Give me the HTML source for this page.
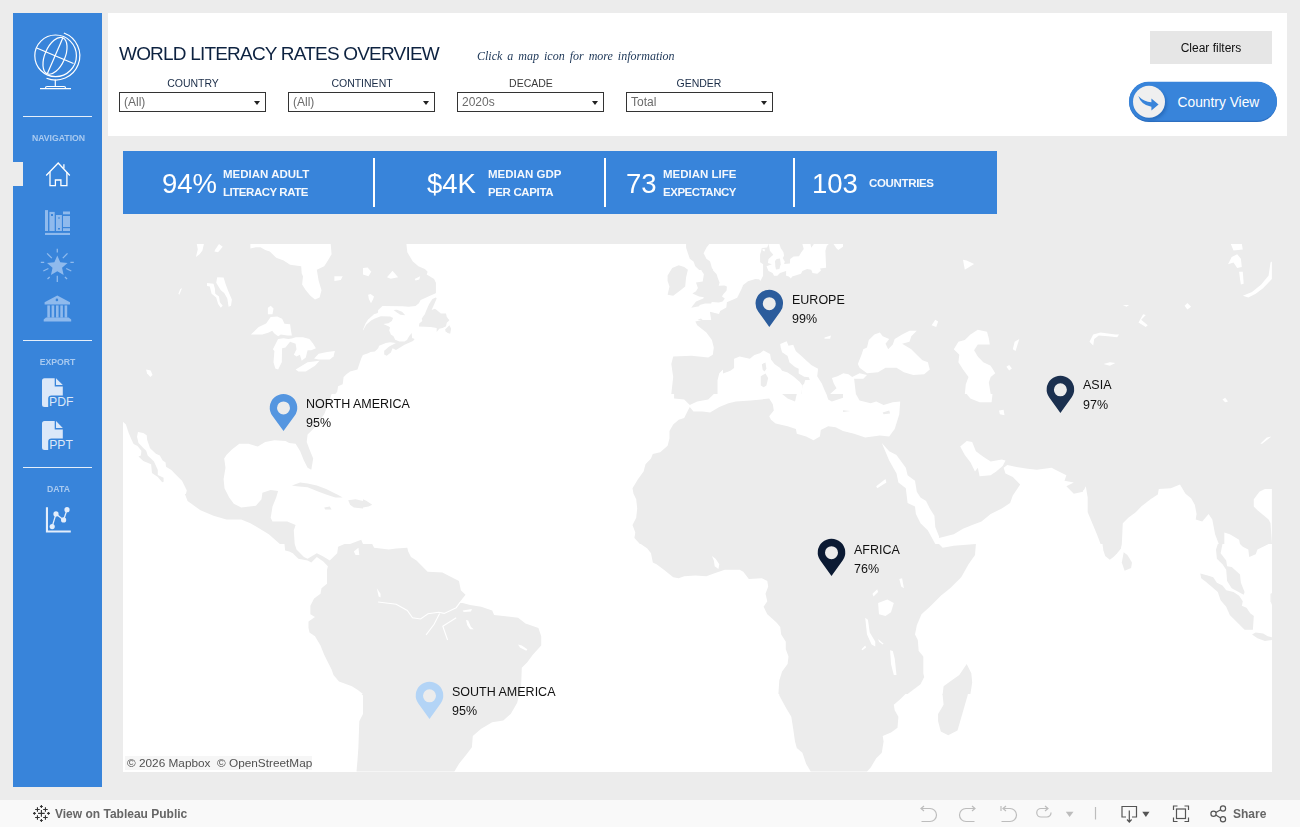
<!DOCTYPE html>
<html><head><meta charset="utf-8">
<style>
*{margin:0;padding:0;box-sizing:border-box}
html,body{width:1300px;height:827px;overflow:hidden;background:#ececec;font-family:"Liberation Sans",sans-serif}
.a{position:absolute;white-space:nowrap;line-height:1}
.pl,.title,.hint,.flab,.ftxt,.kbig,.ksm,.at,.btxt,.slab,#clear{will-change:transform}
#side{left:13px;top:13px;width:89px;height:774px;background:#3884da}
.sline{position:absolute;left:10px;width:69px;height:1.5px;background:#e6effa}
.slab{position:absolute;left:0;width:89px;text-align:center;font-size:8.7px;font-weight:bold;color:#a9caf0;line-height:1}
#hdr{left:108px;top:13px;width:1179px;height:123px;background:#fff}
.title{left:119px;top:43.9px;font-size:19px;color:#0d2240;letter-spacing:-0.8px}
.hint{left:477px;top:50px;font-family:"Liberation Serif",serif;font-style:italic;font-size:12px;color:#1b3556;word-spacing:2px}
.flab{font-size:10.5px;color:#1a2c47;text-align:center;width:146px;top:78.1px}
.fbox{position:absolute;top:92px;width:147px;height:20px;border:1px solid #333;background:#fff}
.ftxt{position:absolute;left:3.5px;top:2.8px;font-size:12px;line-height:1;color:#6b6b6b;white-space:nowrap}
.fbox:after{content:"";position:absolute;right:5px;top:8px;border-left:3.5px solid transparent;border-right:3.5px solid transparent;border-top:4.5px solid #222}
#clear{left:1150px;top:31px;width:122px;height:33px;background:#e6e6e6;font-size:12px;color:#111;text-align:center;line-height:34.5px}
#kpi{left:123px;top:151px;width:874px;height:63px;background:#3884da;color:#fff}
.ksep{position:absolute;top:7px;width:2px;height:49px;background:#fff}
.kbig{position:absolute;top:18.7px;font-size:27.5px;line-height:27.5px;white-space:nowrap}
.ksm{position:absolute;font-size:11.5px;font-weight:bold;line-height:17.5px;white-space:nowrap;color:#f4f8fd}
#map{left:123px;top:244px;width:1149px;height:528px;background:#fff;overflow:hidden}
.pl{position:absolute;font-size:12.5px;color:#111;line-height:1;white-space:nowrap}
#attr{left:125px;top:756px;width:187px;height:14px;background:rgba(245,245,245,0.85)}
.at{left:127px;top:757.8px;font-size:11.8px;color:#505050}
#bar{left:0;top:800px;width:1300px;height:27px;background:#f9f9f9}
.btxt{font-size:12px;color:#666;font-weight:bold;top:808px}
</style></head><body>
<div id="side" class="a">
  <svg style="position:absolute;left:0;top:0" width="89" height="774" viewBox="0 0 89 774">
    <g fill="none" stroke="#fff" stroke-width="1.2">
      <circle cx="42.6" cy="42.8" r="20.8"/>
      <ellipse cx="42" cy="42.8" rx="10" ry="19.6" transform="rotate(23.4 42 42.8)"/>
      <line x1="49.8" y1="24.9" x2="34.3" y2="60.7"/>
      <line x1="23.7" y1="35" x2="60.5" y2="50.5"/>
      <path d="M50.84 20.05 A24.2 24.2 0 1 1 33.53 65.24"/>
      <path d="M42.3 66.5 V73.5 M32.5 75 Q32.5 73.5 34 73.5 H51 Q52.5 73.5 52.5 75 M27 75.7 H58"/>
    </g>
    <!-- home -->
    <g fill="none" stroke="#fff" stroke-width="1.3" stroke-linejoin="miter">
      <path d="M33.2 162.5 L45.2 150 L56.8 162.5"/>
      <path d="M37 159 V172.7 H42.4 V167 H47.9 V172.7 H53.9 V159"/>
      <path d="M50.9 151.3 V155.5"/>
    </g>
    <!-- books -->
    <g fill="#8fbaed">
      <rect x="32" y="197.1" width="3" height="20.9"/>
      <rect x="36.4" y="198.9" width="5.3" height="19.1"/>
      <rect x="43" y="202" width="5.9" height="16"/>
      <rect x="50" y="198.5" width="7" height="2.8"/>
      <rect x="50" y="203" width="7" height="11"/>
      <rect x="50" y="215.2" width="7" height="2.8"/>
      <rect x="32" y="219.9" width="25" height="2.1"/>
    </g>
    <g fill="#3884da"><rect x="38" y="201" width="2" height="2"/><rect x="45" y="204.5" width="2" height="1"/><rect x="45" y="215" width="2" height="1.5"/></g>
    <!-- star -->
    <g fill="#8fbaed">
      <polygon points="44.30,242.50 47.24,249.25 54.57,249.96 49.06,254.85 50.65,262.04 44.30,258.30 37.95,262.04 39.54,254.85 34.03,249.96 41.36,249.25"/>
    </g>
    <g stroke="#8fbaed" stroke-width="1.3" fill="none" stroke-linecap="butt">
      <path d="M44.3 235.7 V239.6 M34.1 240.4 L38.8 245.1 M54.5 240.4 L49.8 245.1 M27.8 249.3 H31.2 M60.8 249.3 H57.4 M30.3 258 L35.4 255.5 M58.3 258 L53.2 255.5 M34.5 266 L36.7 264 M54.1 266 L51.9 264 M44.3 262.7 V269"/>
    </g>
    <!-- bank -->
    <g fill="#8fbaed">
      <path d="M44.3 282.6 L57 289.3 V291.4 H31.6 V289.3 Z"/>
      <rect x="34.3" y="292.4" width="2.6" height="12.2"/>
      <rect x="38.6" y="292.4" width="2.6" height="12.2"/>
      <rect x="43" y="292.4" width="2.6" height="12.2"/>
      <rect x="47.3" y="292.4" width="2.6" height="12.2"/>
      <rect x="51.6" y="292.4" width="2.6" height="12.2"/>
      <path d="M33 304.6 H55.6 L58.2 306.6 V308.4 H30.7 V306.6 Z"/>
    </g>
    <circle cx="43.9" cy="286.9" r="1.3" fill="#3884da"/>
    <!-- pdf -->
    <g fill="#dbe8f9">
      <path d="M31.5 365.2 H41.7 V373.6 H49.8 V382.4 H38.5 Q35.2 382.4 35.2 385.5 V394 H31.5 Q29 394 29 391.5 V367.7 Q29 365.2 31.5 365.2 Z"/>
      <polygon points="43,365.2 49.8,372 43,372"/>
    </g>
    <text x="36" y="393.4" font-family="Liberation Sans" font-size="12.2" fill="#dbe8f9">PDF</text>
    <!-- ppt -->
    <g fill="#dbe8f9">
      <path d="M31.5 408.1 H41.7 V416.5 H49.8 V425.4 H38.5 Q35.2 425.4 35.2 428.5 V436.9 H31.5 Q29 436.9 29 434.4 V410.6 Q29 408.1 31.5 408.1 Z"/>
      <polygon points="43,408.1 49.8,414.9 43,414.9"/>
    </g>
    <text x="36.2" y="436.4" font-family="Liberation Sans" font-size="12.2" fill="#dbe8f9">PPT</text>
    <!-- chart -->
    <g fill="none" stroke="#e4eefb" stroke-width="1.3">
      <path d="M33.95 494.2 V518.5 H57.8" stroke-width="2.1"/>
      <path d="M39.2 513.6 L43 500.9 L50.6 506.9 L54 496.7"/>
    </g>
    <g fill="#e4eefb">
      <circle cx="39.2" cy="513.6" r="2.6"/><circle cx="43" cy="500.9" r="2.6"/><circle cx="50.6" cy="506.9" r="2.6"/><circle cx="54" cy="496.7" r="2.6"/>
    </g>
  </svg>
  <div class="sline" style="top:102.7px"></div>
  <div class="slab" style="top:120.5px;left:0.6px">NAVIGATION</div>
  <div style="position:absolute;left:0;top:148.8px;width:10px;height:24.2px;background:#ececec"></div>
  <div class="sline" style="top:326.8px"></div>
  <div class="slab" style="top:344.6px">EXPORT</div>
  <div class="sline" style="top:453.5px"></div>
  <div class="slab" style="top:471.5px;left:0.7px">DATA</div>
</div>

<div id="hdr" class="a"></div>
<div class="a title">WORLD LITERACY RATES OVERVIEW</div>
<div class="a hint">Click a map icon for more information</div>
<div class="a flab" style="left:119.5px">COUNTRY</div>
<div class="a flab" style="left:288.5px">CONTINENT</div>
<div class="a flab" style="left:457.5px;color:#3a3a3a">DECADE</div>
<div class="a flab" style="left:626px">GENDER</div>
<div class="fbox" style="left:119px"><span class="ftxt">(All)</span></div>
<div class="fbox" style="left:288px"><span class="ftxt">(All)</span></div>
<div class="fbox" style="left:457px"><span class="ftxt">2020s</span></div>
<div class="fbox" style="left:626px"><span class="ftxt">Total</span></div>
<div id="clear" class="a">Clear filters</div>

<svg class="a" style="left:1120px;top:75px" width="170" height="55" viewBox="1120 75 170 55">
  <defs>
    <filter id="sh" x="-30%" y="-30%" width="160%" height="160%"><feGaussianBlur stdDeviation="1.5"/></filter>
  </defs>
  <rect x="1129" y="82" width="148" height="40" rx="20" fill="#2d6fc0"/>
  <rect x="1129" y="81.8" width="148" height="39" rx="19.5" fill="#3884da"/>
  <circle cx="1151" cy="104" r="16" fill="#1f5fae" opacity="0.6" filter="url(#sh)"/>
  <circle cx="1149" cy="101.8" r="16" fill="#efefef"/>
  <path d="M1138.3 95.9 Q1141 104.8 1151.4 106.8 L1151.4 110.6 L1158.6 104.4 L1151.4 98.5 L1151.4 102.3 Q1144 101.8 1138.3 95.9 Z" fill="#3884da"/>
  <text x="1177.5" y="107" font-family="Liberation Sans" font-size="13.8" fill="#fff">Country View</text>
</svg>

<div id="kpi" class="a">
  <div class="kbig" style="left:39px">94%</div>
  <div class="ksm" style="left:100.2px;top:15.3px">MEDIAN ADULT<br><span style="letter-spacing:-0.46px">LITERACY RATE</span></div>
  <div class="ksep" style="left:249.7px"></div>
  <div class="kbig" style="left:303.5px">$4K</div>
  <div class="ksm" style="left:365.2px;top:15.3px">MEDIAN GDP<br><span style="letter-spacing:-0.36px">PER CAPITA</span></div>
  <div class="ksep" style="left:480.8px"></div>
  <div class="kbig" style="left:503px">73</div>
  <div class="ksm" style="left:540.3px;top:15.3px">MEDIAN LIFE<br><span style="letter-spacing:-0.47px">EXPECTANCY</span></div>
  <div class="ksep" style="left:669.7px"></div>
  <div class="kbig" style="left:689px">103</div>
  <div class="ksm" style="left:746.3px;top:24.3px;letter-spacing:-0.34px">COUNTRIES</div>
</div>

<div id="map" class="a">
<svg width="1149" height="528" viewBox="123 244 1149 528" style="position:absolute;left:0;top:0"><defs>
<clipPath id="c0"><rect x="123" y="244" width="240" height="150"/></clipPath>
<clipPath id="c1"><rect x="363" y="244" width="240" height="150"/></clipPath>
<clipPath id="c2"><rect x="363" y="294" width="100" height="70"/></clipPath>
<clipPath id="c3"><rect x="603" y="244" width="240" height="150"/></clipPath>
<clipPath id="c4"><rect x="723" y="244" width="120" height="75"/></clipPath>
<clipPath id="c5"><rect x="723" y="319" width="120" height="75"/></clipPath>
<clipPath id="c6"><rect x="843" y="244" width="240" height="150"/></clipPath>
<clipPath id="c7"><rect x="1083" y="244" width="189" height="150"/></clipPath>
<clipPath id="c8"><rect x="123" y="394" width="240" height="150"/></clipPath>
<clipPath id="c9"><rect x="123" y="414" width="80" height="80"/></clipPath>
<clipPath id="c10"><rect x="363" y="394" width="240" height="150"/></clipPath>
<clipPath id="c11"><rect x="603" y="394" width="240" height="150"/></clipPath>
<clipPath id="c12"><rect x="843" y="394" width="240" height="150"/></clipPath>
<clipPath id="c13"><rect x="1083" y="394" width="189" height="150"/></clipPath>
<clipPath id="c14"><rect x="123" y="544" width="240" height="150"/></clipPath>
<clipPath id="c15"><rect x="363" y="544" width="240" height="150"/></clipPath>
<clipPath id="c16"><rect x="603" y="544" width="240" height="150"/></clipPath>
<clipPath id="c17"><rect x="843" y="544" width="240" height="150"/></clipPath>
<clipPath id="c18"><rect x="1083" y="544" width="189" height="150"/></clipPath>
<clipPath id="c19"><rect x="123" y="694" width="240" height="78"/></clipPath>
<clipPath id="c20"><rect x="363" y="694" width="240" height="78"/></clipPath>
<clipPath id="c21"><rect x="603" y="694" width="240" height="78"/></clipPath>
<clipPath id="c22"><rect x="843" y="694" width="240" height="78"/></clipPath>
<clipPath id="c23"><rect x="690" y="270" width="70" height="50"/></clipPath>
<clipPath id="c24"><rect x="755" y="244" width="88" height="46"/></clipPath>
</defs>
<g clip-path="url(#c0)">
<rect x="123" y="244" width="240" height="150" fill="#ececec"/>
<polygon points="250.4,244.0 250.4,248.6 255.9,247.3 260.5,247.3 265.2,249.9 269.8,251.4 276.2,257.8 283.6,260.6 290.1,264.7 301.2,266.2 301.7,273.5 303.0,276.3 302.1,284.6 305.8,290.2 310.4,295.7 315.0,299.4 319.6,297.5 321.5,290.2 318.7,280.9 316.8,269.8 324.2,266.2 327.9,260.6 331.6,254.2 330.7,244.0" fill="#ffffff"/>
<polygon points="217.2,277.2 223.6,277.6 225.5,283.7 228.2,291.1 231.9,299.4 231.0,305.8 228.6,306.8 227.3,298.5 224.2,292.9 220.8,290.2 216.2,282.8" fill="#ffffff"/>
<polygon points="207.0,283.1 213.5,283.7 214.8,288.3 215.3,293.8 219.0,296.6 219.9,302.2 222.7,305.8 220.8,307.7 218.1,304.0 216.2,297.5 211.6,293.8 209.8,286.5 207.0,286.1" fill="#ffffff"/>
<polygon points="196.8,244.0 203.9,244.0 202.4,250.5 199.6,254.2 195.9,256.9 197.8,249.5" fill="#ffffff"/>
<polygon points="215.3,249.5 219.0,244.0 222.7,246.8 218.1,252.3 214.4,251.4" fill="#ffffff"/>
<polygon points="334.4,276.3 342.7,276.3 340.8,280.0 334.4,280.9" fill="#ffffff"/>
<polygon points="178.4,293.8 180.2,289.2 182.1,287.9 179.3,294.8" fill="#ffffff"/>
<polygon points="146.1,369.5 150.7,370.5 152.5,375.1 150.3,376.9 147.0,373.2" fill="#ffffff"/>
<polygon points="267.9,307.7 270.7,305.8 273.5,308.6 272.5,314.2 267.9,314.2" fill="#ffffff"/>
<polygon points="250.8,334.5 258.7,327.1 266.1,323.4 270.7,316.9 277.2,316.6 282.1,318.8 284.5,323.8 290.1,324.3 291.0,330.8 291.9,335.4 287.3,335.4 280.8,334.5 278.1,336.3 274.4,333.5 272.2,330.8 268.8,332.6 262.4,334.5 258.7,334.5" fill="#ffffff"/>
<polygon points="272.9,349.2 278.1,339.1 283.6,338.2 288.2,339.1 291.9,338.5 295.6,337.2 303.0,337.2 309.5,339.1 313.2,343.7 315.9,348.3 311.3,350.2 307.6,350.2 305.8,357.5 301.7,360.7 299.9,354.8 296.5,356.6 293.8,354.8 296.5,349.2 295.6,343.7 290.1,341.8 285.5,347.4 282.1,348.3 281.8,362.2 278.1,369.5 275.3,368.6 273.5,362.2 274.4,351.1" fill="#ffffff"/>
<polygon points="295.6,369.5 300.2,366.8 307.6,362.2 319.6,360.7 315.0,365.8 305.8,371.4 298.4,371.4" fill="#ffffff"/>
<polygon points="314.1,358.5 318.7,353.8 327.0,352.0 334.9,351.1 333.5,356.6 329.8,359.4 318.7,359.4" fill="#ffffff"/>
<polygon points="363.0,354.8 361.2,358.5 359.3,364.0 357.5,369.5 350.1,371.4 346.4,374.2 343.6,376.9 342.7,384.3 338.1,386.2 337.2,391.7 335.3,393.9 363.0,393.9" fill="#ffffff"/>
</g>
<g clip-path="url(#c1)">
<rect x="363" y="244" width="240" height="150" fill="#ffffff"/>
<polygon points="363.0,244.0 406.4,244.0 407.3,252.3 412.8,261.5 418.4,266.2 424.8,268.9 427.6,271.7 426.7,274.5 434.1,279.1 435.9,282.8 435.9,292.9 430.4,296.2 422.1,297.5 418.4,303.1 414.7,306.4 401.8,307.1 383.3,305.8 378.7,308.6 376.8,313.2 370.4,316.0 364.8,323.4 363.0,328.0" fill="#ececec"/>
<polygon points="363.0,268.0 367.6,267.6 371.3,271.7 368.5,276.3 363.0,274.5" fill="#ffffff"/>
<polygon points="387.0,277.2 392.5,270.8 398.1,277.2 390.7,278.7" fill="#ffffff"/>
<polygon points="414.7,279.1 420.2,276.3 419.3,279.4 415.6,280.6" fill="#ffffff"/>
<polygon points="363.0,330.8 363.0,354.8 368.5,352.9 375.9,351.1 381.5,348.3 385.2,355.7 388.8,353.8 394.4,349.2 407.3,343.7 413.8,339.1 411.0,332.6 406.4,339.1 399.0,338.2 390.7,332.6 390.7,325.2 383.3,324.3 393.5,318.8 390.7,316.0 381.5,316.0 368.5,321.5" fill="#ececec"/>
<polygon points="419.3,325.2 422.1,317.8 425.8,308.6 431.3,299.4 435.9,297.5 435.0,304.9 432.2,310.5 436.8,313.2 446.1,313.8 447.0,318.8 449.8,320.6 447.0,325.2 450.7,328.9 449.8,333.5 445.2,330.8 438.7,328.9 436.8,331.7 427.6,326.2" fill="#ececec"/>
</g>
<g clip-path="url(#c2)">
<rect x="363" y="294" width="100" height="70" fill="#ffffff"/>
<polygon points="363.0,294.0 434.1,294.0 429.9,295.7 425.7,297.8 420.6,299.9 418.9,303.3 415.5,305.9 408.7,306.7 402.8,306.3 382.5,306.0 378.2,310.1 377.8,313.1 374.0,314.3 368.1,319.4 365.5,323.6 363.0,329.6" fill="#ececec"/>
<polygon points="368.1,294.8 370.6,294.0 374.0,296.5 373.2,299.1 371.0,303.3 368.9,299.1" fill="#ffffff"/>
<polygon points="393.5,310.1 396.9,309.7 402.0,311.8 405.3,315.2 400.3,314.7 396.9,312.6" fill="#ececec"/>
<polygon points="363.0,355.0 363.0,330.4 366.4,324.5 371.5,320.2 374.9,318.6 380.8,316.2 390.1,316.4 393.1,318.1 391.8,321.1 388.4,323.2 383.3,324.1 388.4,326.2 390.1,327.4 389.2,330.4 390.9,334.6 393.5,336.3 395.2,339.7 399.4,341.4 404.5,341.4 407.0,340.1 409.1,336.3 411.7,333.0 412.1,338.0 414.7,338.9 413.0,341.0 409.1,342.7 404.5,344.8 396.0,349.9 392.6,348.2 390.9,352.4 386.7,355.8 384.2,354.5 384.2,350.7 389.2,346.5 396.0,343.1 390.1,342.3 385.9,343.1 379.1,345.7 378.2,348.2 374.9,351.6 370.6,352.0 368.1,353.3" fill="#ececec"/>
<polygon points="393.1,333.8 394.8,333.0 394.8,335.5 393.1,335.1" fill="#ffffff"/>
<polygon points="396.0,335.9 402.8,336.8 402.4,338.0 396.9,337.6" fill="#ffffff"/>
<polygon points="418.9,326.6 419.3,323.6 422.3,321.1 421.8,318.6 424.8,314.3 426.5,310.1 429.0,304.2 432.4,299.1 435.8,297.4 436.7,298.2 435.0,302.5 431.6,310.1 435.0,308.8 436.7,310.1 440.9,313.5 446.0,313.5 446.8,316.9 449.4,320.2 446.8,322.8 446.0,326.2 442.6,327.9 439.2,328.7 436.7,332.1 436.7,327.9 430.7,327.0" fill="#ececec"/>
<polygon points="445.1,329.6 449.4,325.3 451.1,328.7 450.2,333.8 447.7,333.0 445.6,331.3" fill="#ececec"/>
</g>
<g clip-path="url(#c3)">
<rect x="603" y="244" width="240" height="150" fill="#ffffff"/>
<polygon points="686.1,244.0 709.2,244.0 706.4,247.7 703.6,253.2 706.4,258.8 710.1,261.5 711.9,268.0 717.5,275.4 718.4,280.9 723.9,284.6 726.7,288.3 724.8,292.9 721.2,297.5 713.8,299.4 706.4,301.2 699.0,303.1 693.5,306.8 691.6,304.9 697.2,299.4 702.7,297.5 699.0,293.8 695.3,290.2 693.5,286.5 697.2,282.8 693.5,278.2 695.3,273.5 699.0,269.8 695.3,266.2 693.5,261.5 689.8,258.8 687.9,253.2 686.1,247.7" fill="#ececec"/>
<polygon points="667.6,275.4 672.2,268.0 678.7,265.2 684.2,267.1 687.9,269.8 686.1,277.2 685.2,286.5 680.5,290.2 673.2,295.7 667.6,294.8 669.5,286.5 667.6,280.9" fill="#ececec"/>
<polygon points="671.3,393.9 673.2,376.9 671.3,364.0 673.2,356.6 691.6,355.7 708.2,357.5 712.8,354.8 713.8,347.4 711.9,340.0 706.4,332.6 697.2,325.2 695.3,321.5 702.7,319.7 710.1,314.2 718.4,311.4 724.8,304.9 732.2,299.4 737.8,296.6 741.5,290.2 745.2,283.7 750.7,280.9 761.8,278.2 761.8,269.8 763.6,262.5 761.8,255.1 763.6,247.7 768.2,244.0 843.0,244.0 843.0,393.9 830.1,393.9 824.5,384.3 815.3,378.8 807.9,375.1 798.7,369.5 789.5,360.3 783.9,351.1 781.2,343.7 784.8,340.9 780.2,340.0 772.8,347.4 770.1,352.9 763.6,351.1 754.4,354.8 743.3,356.6 735.9,356.6 733.2,362.2 724.8,367.7 719.3,373.2 717.5,380.6 717.5,393.9" fill="#ececec"/>
<polygon points="761.8,364.0 765.5,362.2 767.3,373.2 769.2,384.3 765.5,389.8 762.7,384.3 763.6,373.2" fill="#ececec"/>
<polygon points="822.7,336.3 831.9,335.4 830.1,339.1 824.5,338.5" fill="#ffffff"/>
</g>
<g clip-path="url(#c4)">
<rect x="723" y="244" width="120" height="75" fill="#ececec"/>
<polygon points="723.0,244.0 768.2,244.0 766.4,247.7 761.8,248.6 759.9,253.2 760.8,262.5 763.6,268.0 762.7,275.4 759.9,279.1 753.5,279.1 748.8,280.9 742.4,285.5 739.6,290.2 736.8,296.6 728.5,300.3 726.7,304.0 726.7,308.6 723.0,310.5" fill="#ffffff"/>
<polygon points="766.4,265.2 771.0,261.5 774.7,257.8 776.5,254.2 780.2,251.4 783.0,255.1 783.9,262.5 787.6,261.5 791.3,257.8 795.9,256.9 802.4,251.4 803.3,247.7 811.6,244.0 816.2,244.0 815.3,249.5 815.3,260.6 824.5,262.5 825.5,251.4 828.2,244.0 830.1,244.0 825.5,253.2 825.5,265.2 819.9,270.8 815.3,273.5 807.9,269.8 796.8,272.6 791.3,278.2 785.8,275.4 778.4,275.4 773.8,276.3 768.2,271.7" fill="#ffffff"/>
<polygon points="769.2,244.0 778.4,244.0 783.0,249.5 780.2,251.4 776.5,254.2 771.0,253.2" fill="#ffffff"/>
<polygon points="831.9,244.0 843.0,244.0 843.0,247.7 838.4,249.5 833.8,247.7" fill="#ffffff"/>
</g>
<g clip-path="url(#c5)">
<rect x="723" y="319" width="120" height="75" fill="#ececec"/>
<polygon points="723.0,373.5 730.4,370.7 734.1,367.9 734.1,358.7 739.6,356.4 749.8,358.7 754.4,355.0 759.9,353.2 763.6,350.4 770.1,354.1 771.0,359.6 774.7,364.2 780.2,367.9 782.1,370.7 787.6,372.5 793.2,376.2 799.6,381.8 802.4,385.5 801.5,394.0 723.0,394.0" fill="#ffffff"/>
<polygon points="761.8,364.2 765.5,362.4 766.4,368.8 764.5,371.6 762.7,369.8" fill="#ececec"/>
<polygon points="760.8,376.2 765.5,373.5 768.2,378.1 766.4,385.5 763.6,387.3 760.8,385.5" fill="#ececec"/>
<polygon points="780.2,343.9 786.7,341.2 788.5,345.8 793.2,344.8 795.9,351.3 801.5,355.9 805.2,359.6 811.6,365.2 818.1,368.8 817.2,376.2 821.8,383.6 824.5,390.1 826.4,394.0 801.5,394.0 802.4,385.5 804.2,383.6 805.2,379.9 809.8,379.9 808.8,377.2 804.2,376.7 798.7,373.5 798.7,368.8 795.0,367.0 789.5,362.4 787.6,355.9 782.1,352.2 780.7,347.6" fill="#ffffff"/>
<polygon points="831.9,378.1 837.5,376.2 843.0,373.5 843.0,394.0 830.1,394.0 836.5,388.2 833.8,383.6" fill="#ffffff"/>
<polygon points="824.5,337.5 831.0,335.6 830.1,338.8 824.5,338.8" fill="#ffffff"/>
</g>
<g clip-path="url(#c6)">
<rect x="843" y="244" width="240" height="150" fill="#ececec"/>
<polygon points="857.8,364.0 861.5,354.8 863.3,349.2 867.0,347.4 868.8,340.0 874.4,334.5 879.9,332.6 882.7,336.3 889.2,339.1 885.5,343.7 888.2,349.2 892.8,344.6 894.7,339.1 902.1,334.5 909.5,330.8 916.8,330.8 911.3,336.3 909.5,341.8 902.1,343.7 911.3,349.2 916.8,354.8 922.4,360.3 927.9,362.2 929.8,369.5 924.2,374.2 913.2,375.1 903.9,372.3 896.5,367.7 885.5,367.7 878.1,372.3 867.0,373.2 859.6,367.7" fill="#ffffff"/>
<polygon points="953.8,349.2 958.4,341.8 964.8,340.0 970.4,334.5 977.8,329.8 987.0,331.7 988.8,338.2 989.8,344.6 977.8,344.6 974.1,350.2 977.8,356.6 983.3,362.2 990.7,365.8 995.3,373.2 990.7,376.9 988.8,382.5 990.7,393.9 964.8,393.9 965.8,384.3 968.5,376.9 963.0,369.5 958.4,362.2 959.3,354.8" fill="#ffffff"/>
<polygon points="843.0,373.2 848.5,374.2 852.2,376.9 859.6,373.2 867.0,375.1 863.3,378.8 854.1,378.8 855.9,393.9 843.0,393.9" fill="#ffffff"/>
<polygon points="931.6,325.2 935.3,319.7 938.1,321.5 936.2,327.1" fill="#ffffff"/>
<polygon points="963.0,259.7 966.7,260.6 974.1,263.9 964.8,269.8" fill="#ffffff"/>
<polygon points="1012.8,349.2 1014.7,341.8 1019.3,339.1 1015.6,351.1" fill="#ffffff"/>
<polygon points="1006.4,366.8 1009.2,364.9 1011.9,368.6 1009.2,370.5" fill="#ffffff"/>
</g>
<g clip-path="url(#c7)">
<rect x="1083" y="244" width="189" height="150" fill="#ececec"/>
<polygon points="1242.8,295.7 1252.0,292.0 1261.2,284.6 1268.6,275.4 1270.5,262.5 1271.9,261.5 1271.9,279.1 1263.1,288.3 1255.7,293.8 1248.3,297.5" fill="#ffffff"/>
<polygon points="1228.0,264.3 1231.7,256.9 1237.2,254.2 1240.9,258.8 1241.8,267.1 1237.2,268.0 1233.5,262.5" fill="#ffffff"/>
<polygon points="1230.8,244.0 1241.8,244.0 1242.8,249.5 1233.5,250.5" fill="#ffffff"/>
<polygon points="1239.1,271.7 1242.8,271.7 1243.7,283.7 1240.9,284.6 1240.0,279.1" fill="#ffffff"/>
<polygon points="1089.5,341.8 1093.2,334.5 1100.6,332.6 1115.4,334.5 1119.1,334.5 1117.2,337.2 1108.0,336.3 1098.8,335.4 1094.2,339.1 1093.2,345.5" fill="#ffffff"/>
<polygon points="1103.4,364.0 1109.8,362.2 1115.4,363.1 1109.8,365.8" fill="#ffffff"/>
<polygon points="1184.6,305.8 1187.4,303.1 1191.1,306.8 1187.4,309.5" fill="#ffffff"/>
<polygon points="1138.5,322.5 1143.1,314.2 1145.8,315.1 1141.2,319.7 1147.7,325.2 1145.8,327.1" fill="#ffffff"/>
<polygon points="1122.8,304.9 1129.2,304.9 1126.5,306.8" fill="#ffffff"/>
</g>
<g clip-path="url(#c8)">
<rect x="123" y="394" width="240" height="150" fill="#ffffff"/>
<polygon points="123.0,394.0 331.6,394.0 327.9,405.1 324.2,414.3 318.7,421.7 315.0,427.2 307.6,434.6 306.7,442.0 309.5,449.4 313.2,458.6 311.3,469.7 307.6,467.8 303.9,460.5 300.2,451.2 295.6,443.8 289.2,442.9 285.5,441.1 274.4,440.2 265.2,442.0 257.8,446.6 248.5,443.8 239.3,443.8 231.9,449.4 226.4,454.9 224.2,458.6 225.5,467.8 223.6,478.9 224.5,488.2 229.2,497.4 233.8,503.8 241.2,507.5 255.9,505.7 261.5,499.2 262.4,492.8 270.7,490.0 278.1,490.9 276.2,497.4 272.5,506.6 270.7,517.7 272.5,521.4 287.3,521.4 295.6,525.1 293.8,530.6 294.7,543.9 279.9,543.9 268.8,534.3 250.4,523.2 241.2,519.5 226.4,519.5 213.5,515.8 200.5,510.3 187.6,501.1 184.8,493.7 183.9,484.5 176.5,475.2 169.2,467.8 162.7,460.5 152.5,451.2 147.0,443.8 137.8,430.9 134.1,429.1 130.4,423.5 123.0,419.8" fill="#ececec"/>
<polygon points="291.9,485.4 300.2,482.6 307.6,483.5 316.8,485.4 326.1,489.1 337.2,494.6 342.7,497.4 335.3,497.4 326.1,494.6 318.7,491.8 307.6,487.2 296.5,486.3" fill="#ececec"/>
<polygon points="348.2,500.2 355.6,499.2 363.0,501.1 363.0,508.5 353.8,507.5 350.1,504.8" fill="#ececec"/>
<polygon points="324.2,507.5 329.8,506.6 331.6,509.4 325.2,509.4" fill="#ececec"/>
<polygon points="350.1,543.9 361.2,539.8 363.0,543.9" fill="#ececec"/>
</g>
<g clip-path="url(#c9)">
<rect x="123" y="414" width="80" height="80" fill="#ececec"/>
<polygon points="123.0,421.7 123.0,494.0 185.9,494.0 186.8,490.4 184.4,485.6 182.0,480.7 176.2,474.9 171.4,470.1 166.0,466.7 165.6,462.4 162.7,460.4 159.8,455.6 155.9,453.7 150.1,448.3 147.2,440.1 146.7,435.3 143.3,432.9 138.0,431.9 137.0,436.7 138.5,443.0 142.3,446.9 146.2,450.8 147.7,455.6 154.0,461.4 157.8,470.1 157.8,474.9 163.6,477.8 163.6,481.7 162.2,482.2 157.8,476.9 152.0,473.0 151.1,464.3 143.3,460.9 138.5,456.6 140.9,455.6 141.4,450.8 137.5,445.9 133.6,444.0 131.7,440.1 128.8,433.3 125.9,424.6" fill="#ffffff"/>
</g>
<g clip-path="url(#c10)">
<rect x="363" y="394" width="240" height="150" fill="#ffffff"/>
<polygon points="363.0,499.2 366.7,501.1 372.2,504.8 368.5,506.6 363.0,507.5" fill="#ececec"/>
</g>
<g clip-path="url(#c11)">
<rect x="603" y="394" width="240" height="150" fill="#ffffff"/>
<polygon points="674.1,394.0 713.8,394.0 708.2,399.5 697.2,401.4 689.8,405.1 684.2,399.5 674.1,398.6" fill="#ececec"/>
<polygon points="689.8,406.9 693.5,411.5 702.7,411.5 710.1,412.5 719.3,406.9 728.5,403.2 735.9,401.4 750.7,400.5 769.2,398.6 772.8,404.2 773.8,410.6 769.2,416.2 771.0,419.8 775.6,423.5 787.6,426.3 795.9,429.1 796.8,433.7 806.1,436.5 813.5,440.2 819.9,436.5 820.8,430.0 828.2,426.3 835.6,427.2 843.0,430.9 843.0,543.9 639.9,543.9 634.4,538.0 635.3,532.5 632.5,525.1 636.2,517.7 637.2,508.5 636.2,499.2 633.5,493.7 632.5,488.2 638.1,478.9 643.6,471.5 645.5,464.2 651.0,458.6 652.8,454.0 660.2,452.2 667.6,445.7 669.5,438.3 669.5,430.9 673.2,424.5 678.7,419.8 684.2,418.0 687.9,410.6" fill="#ececec"/>
<polygon points="782.1,394.0 796.8,394.0 795.0,401.4 787.6,398.6" fill="#ececec"/>
<polygon points="826.4,394.0 843.0,394.0 843.0,397.7 831.9,401.4 828.2,399.5" fill="#ececec"/>
</g>
<g clip-path="url(#c12)">
<rect x="843" y="394" width="240" height="150" fill="#ececec"/>
<polygon points="843.0,394.0 855.9,394.0 859.6,400.5 870.7,403.2 876.2,401.4 883.6,405.1 892.8,402.3 900.2,401.4 899.3,414.3 894.7,429.1 889.2,436.5 879.9,435.5 865.2,437.4 854.1,433.7 843.0,430.9" fill="#ffffff"/>
<polygon points="882.7,412.5 889.2,410.6 890.1,413.4 883.6,414.3" fill="#ececec"/>
<polygon points="843.0,410.2 850.4,411.0 843.0,412.1" fill="#ececec"/>
<polygon points="881.8,442.9 889.2,451.2 896.5,454.9 905.8,467.8 907.6,475.2 915.0,480.8 916.8,491.8 920.5,497.4 926.1,501.1 929.8,508.5 934.4,515.8 935.3,526.9 939.0,536.2 939.0,543.9 935.3,543.9 927.9,530.6 920.5,523.2 915.9,514.0 915.0,506.6 907.6,502.9 905.8,488.2 898.4,482.6 896.5,473.4 889.2,460.5" fill="#ffffff"/>
<polygon points="960.2,446.6 966.7,441.1 972.2,442.0 975.9,451.2 983.3,456.8 990.7,461.4 1001.8,459.5 1005.5,460.5 1002.7,466.0 996.2,471.5 990.7,475.2 979.6,476.2 977.8,467.8 975.0,471.5 970.4,462.3 964.8,454.9" fill="#ffffff"/>
<polygon points="1003.6,467.8 1005.5,473.4 1012.8,477.1 1020.2,484.5 1012.8,495.5 1010.1,502.9 1001.8,508.5 990.7,514.0 981.5,521.4 972.2,525.1 963.0,528.8 953.8,534.3 939.0,538.0 939.0,543.9 1083.0,543.9 1083.0,491.8 1073.8,493.7 1066.4,486.3 1073.8,482.6 1064.5,480.8 1066.4,475.2 1055.3,469.7 1051.6,467.8 1036.8,469.7 1027.6,468.8 1016.5,466.9 1007.3,465.1" fill="#ffffff"/>
<polygon points="966.7,394.0 992.5,394.0 991.6,402.3 979.6,402.3 970.4,398.6" fill="#ffffff"/>
<polygon points="999.0,410.6 1003.6,409.7 1004.5,415.2 999.9,414.3" fill="#ffffff"/>
<polygon points="876.2,486.3 885.5,478.9 886.4,482.6 877.2,488.2" fill="#ffffff"/>
</g>
<g clip-path="url(#c13)">
<rect x="1083" y="394" width="189" height="150" fill="#ececec"/>
<polygon points="1060.0,475.2 1067.4,476.2 1065.5,480.8 1074.8,482.6 1069.2,486.3 1076.6,493.7 1084.0,490.0 1085.8,486.3 1087.7,497.4 1087.7,512.2 1092.3,523.2 1096.9,534.3 1100.6,543.9 1060.0,543.9" fill="#ffffff"/>
<polygon points="1121.8,543.9 1122.8,523.2 1128.3,517.7 1135.7,512.2 1141.2,506.6 1150.5,499.2 1157.8,494.6 1158.8,489.1 1170.8,488.2 1180.0,484.5 1185.5,493.7 1191.1,498.3 1194.8,504.8 1196.6,514.0 1195.7,519.5 1202.2,521.4 1208.6,514.0 1212.3,519.5 1215.1,534.3 1218.8,543.9" fill="#ffffff"/>
<polygon points="1224.3,543.9 1224.3,532.5 1229.8,534.3 1239.1,539.8 1240.0,543.9" fill="#ffffff"/>
<polygon points="1271.9,543.9 1270.5,523.2 1268.6,519.5 1257.5,510.3 1253.8,506.6 1253.8,499.2 1259.4,491.8 1264.9,489.1 1271.9,489.1" fill="#ffffff"/>
<polygon points="1222.5,399.5 1225.2,397.7 1228.0,401.4 1225.2,402.3" fill="#ffffff"/>
<polygon points="1260.3,443.8 1266.8,437.4 1271.4,436.5 1262.2,443.8" fill="#ffffff"/>
</g>
<g clip-path="url(#c14)">
<rect x="123" y="544" width="240" height="150" fill="#ffffff"/>
<polygon points="284.5,544.0 294.7,544.0 296.5,549.5 303.9,556.9 307.6,558.8 316.8,553.2 322.4,556.0 329.8,560.6 337.2,553.2 338.1,546.8 344.5,544.0 363.0,544.0 363.0,693.9 357.5,689.8 351.9,686.2 339.0,681.5 333.5,675.1 331.6,669.5 327.9,662.2 324.2,654.8 320.5,645.5 315.0,636.3 309.5,632.6 308.5,628.0 308.5,621.5 315.0,616.9 310.4,614.2 310.4,605.8 314.1,598.5 320.5,593.8 321.5,588.3 327.0,583.7 327.0,569.8 327.9,566.2 323.3,561.5 316.8,556.9 311.3,562.5 307.6,560.6 298.4,558.8 292.8,553.2 289.2,551.4 285.1,550.5" fill="#ececec"/>
<polygon points="353.8,551.4 358.4,547.7 359.3,555.1 355.6,555.1" fill="#ffffff"/>
</g>
<g clip-path="url(#c15)">
<rect x="363" y="544" width="240" height="150" fill="#ffffff"/>
<polygon points="363.0,544.0 372.2,544.0 374.1,547.7 388.8,549.5 396.2,548.6 407.3,547.7 408.2,551.4 411.0,556.9 416.5,560.6 427.6,571.7 442.4,572.6 451.6,577.2 459.0,580.9 460.8,590.2 465.5,594.8 459.0,603.1 462.7,603.1 470.1,604.9 481.2,606.8 492.2,610.5 494.1,615.1 503.3,616.0 518.1,617.8 525.5,623.4 538.4,628.0 541.2,636.3 541.2,645.5 532.8,654.8 527.3,662.2 521.8,667.7 520.8,693.9 363.0,693.9" fill="#ececec"/>
<polyline points="378.1,602.0 396.2,604.2 407.3,610.5 412.5,617.8 420.6,619.0 428.0,613.8 438.7,612.3 444.2,613.4 456.2,607.7 459.9,602.7" fill="none" stroke="#fff" stroke-width="1.1"/>
<polyline points="426.1,634.8 434.1,624.3 439.6,613.4" fill="none" stroke="#fff" stroke-width="1.1"/>
<polyline points="456.2,617.8 442.8,626.2 447.6,640.0" fill="none" stroke="#fff" stroke-width="1.1"/>
<polygon points="462.7,610.5 471.9,609.0 471.0,611.4 463.6,611.9" fill="#ffffff"/>
<polygon points="466.0,620.1 468.2,620.6 471.0,627.1 473.8,629.3 470.1,629.3 467.3,625.2" fill="#ffffff"/>
<polygon points="518.1,644.6 521.8,645.5 527.3,649.2 526.4,650.7 519.9,647.4" fill="#ffffff"/>
<polygon points="376.8,588.3 380.5,593.8 380.5,597.5 378.7,596.6" fill="#ffffff"/>
</g>
<g clip-path="url(#c16)">
<rect x="603" y="544" width="240" height="150" fill="#ffffff"/>
<polygon points="640.8,544.0 843.0,544.0 843.0,693.9 778.4,693.9 779.3,680.6 782.1,671.4 787.6,664.0 788.5,656.6 785.8,649.2 785.8,641.8 781.2,634.5 780.2,627.1 776.5,622.5 767.3,614.2 763.6,606.8 767.3,601.2 765.5,593.8 768.2,586.5 767.3,580.9 761.8,578.2 748.8,579.1 743.3,571.7 739.6,569.8 724.8,569.8 713.8,573.5 706.4,576.3 695.3,575.4 684.2,576.3 678.7,578.2 673.2,577.2 663.9,569.8 656.5,564.3 652.8,562.5 651.0,553.2 647.3,548.6" fill="#ececec"/>
<polygon points="711.9,556.0 715.6,558.8 719.3,564.3 718.4,568.9 714.7,566.2 713.8,560.6" fill="#ffffff"/>
</g>
<g clip-path="url(#c17)">
<rect x="843" y="544" width="240" height="150" fill="#ffffff"/>
<polygon points="843.0,544.0 939.0,544.0 942.7,547.7 953.8,545.8 975.9,544.0 975.0,555.1 968.5,564.3 961.2,577.2 950.1,588.3 940.8,595.7 929.8,606.8 921.5,614.2 916.8,625.2 915.0,634.5 917.8,640.0 918.7,651.1 923.3,656.6 923.3,673.2 924.2,676.9 920.5,684.3 907.6,693.9 843.0,693.9" fill="#ececec"/>
<polygon points="942.7,693.9 943.6,686.2 950.1,681.5 959.3,675.1 963.0,669.5 966.7,664.0 971.3,673.2 972.2,682.5 970.4,693.9" fill="#ececec"/>
<polygon points="878.1,603.1 887.3,599.4 893.8,603.1 891.0,612.3 885.5,616.0 879.0,614.2" fill="#ffffff"/>
<polygon points="865.2,617.8 867.9,619.7 869.8,632.6 875.3,641.8 875.3,646.5 871.6,644.6 867.0,634.5" fill="#ffffff"/>
<polygon points="890.1,650.2 892.8,651.1 894.7,658.5 896.5,675.1 893.8,675.1 891.0,664.0" fill="#ffffff"/>
<polygon points="899.3,579.1 902.1,578.2 903.9,588.3 901.2,586.5" fill="#ffffff"/>
<polygon points="872.5,593.8 877.2,589.2 878.1,592.0 873.5,596.6" fill="#ffffff"/>
<polygon points="861.5,649.2 865.2,645.5 866.1,647.4 862.4,650.2" fill="#ffffff"/>
<polygon points="878.1,639.1 883.6,643.7 882.7,644.6 879.0,641.8" fill="#ffffff"/>
</g>
<g clip-path="url(#c18)">
<rect x="1083" y="544" width="189" height="150" fill="#ffffff"/>
<polygon points="1102.5,544.0 1121.8,544.0 1120.9,548.6 1117.2,553.2 1113.5,556.9 1109.8,559.7 1105.2,556.0 1103.4,550.5" fill="#ececec"/>
<polygon points="1123.7,552.3 1127.4,555.1 1132.0,562.5 1131.1,568.0 1124.6,570.8 1121.8,562.5" fill="#ececec"/>
<polygon points="1217.8,544.0 1222.5,544.0 1220.6,553.2 1226.2,560.6 1227.1,566.2 1231.7,567.1 1240.0,574.5 1240.9,582.8 1244.6,592.0 1243.7,594.8 1231.7,588.3 1227.1,580.9 1226.2,569.8 1222.5,564.3 1216.9,558.8 1216.0,549.5" fill="#ececec"/>
<polygon points="1240.0,544.0 1268.6,544.0 1263.1,546.8 1257.5,549.5 1255.7,554.2 1249.2,556.9 1248.3,549.5 1242.8,546.8" fill="#ececec"/>
<polygon points="1200.3,573.5 1207.7,575.4 1213.2,577.2 1216.9,582.8 1222.5,585.5 1226.2,590.2 1233.5,592.0 1239.1,595.7 1242.8,601.2 1241.8,605.8 1246.5,607.7 1250.2,613.2 1253.8,616.0 1252.9,629.8 1244.6,629.8 1239.1,624.3 1229.8,615.1 1226.2,606.8 1220.6,600.3 1217.8,592.0 1211.4,586.5 1205.8,581.8 1201.2,578.2" fill="#ececec"/>
<polygon points="1252.0,634.5 1255.7,632.6 1263.1,633.5 1267.7,636.3 1271.9,637.2 1271.9,640.0 1264.9,640.9 1257.5,638.2" fill="#ececec"/>
<polygon points="1270.5,593.8 1271.9,592.9 1271.9,604.9 1270.5,601.2" fill="#ececec"/>
</g>
<g clip-path="url(#c19)">
<rect x="123" y="694" width="240" height="78" fill="#ffffff"/>
<polygon points="335.3,677.0 363.0,677.0 363.0,695.5 357.5,689.9 350.1,686.2 340.8,681.6" fill="#ececec"/>
<polygon points="359.3,721.3 363.0,713.9 363.0,771.5 356.5,771.5 357.5,760.1 358.4,747.2" fill="#ececec"/>
</g>
<g clip-path="url(#c20)">
<rect x="363" y="694" width="240" height="78" fill="#ffffff"/>
<polygon points="363.0,677.0 520.8,677.0 519.9,691.8 517.2,702.8 510.7,713.9 503.3,720.4 492.2,722.2 481.2,728.7 472.8,736.1 471.9,747.2 466.4,754.5 459.0,763.8 454.4,771.5 363.0,771.5" fill="#ececec"/>
</g>
<g clip-path="url(#c21)">
<rect x="603" y="694" width="240" height="78" fill="#ffffff"/>
<polygon points="779.3,677.0 843.0,677.0 843.0,771.5 810.7,771.5 806.1,763.8 802.4,752.7 796.8,748.1 795.0,741.6 793.2,728.7 791.3,716.7 785.8,707.5 779.3,695.5 778.4,682.5" fill="#ececec"/>
</g>
<g clip-path="url(#c22)">
<rect x="843" y="694" width="240" height="78" fill="#ffffff"/>
<polygon points="843.0,677.0 924.2,677.0 920.5,684.4 907.6,691.8 900.2,699.2 893.8,704.7 894.7,710.2 898.4,716.7 897.5,727.8 891.0,732.4 882.7,736.1 883.6,741.6 881.8,752.7 876.2,758.2 870.7,767.5 867.0,771.5 843.0,771.5" fill="#ececec"/>
<polygon points="872.5,681.6 883.6,680.7 879.9,683.5 874.4,683.5" fill="#ffffff"/>
<polygon points="942.7,685.3 951.9,682.5 959.3,677.0 972.2,677.0 973.2,681.6 969.5,684.4 967.6,695.5 957.5,730.5 948.2,735.2 940.8,731.5 938.1,721.3 938.1,713.9 943.6,704.7 942.7,695.5 940.8,689.9" fill="#ececec"/>
</g>
<g clip-path="url(#c23)">
<rect x="690" y="270" width="70" height="50" fill="#ffffff"/>
<polygon points="701.2,270.0 712.7,270.0 716.6,274.2 717.8,277.9 719.6,282.4 718.7,285.7 724.5,285.4 726.9,286.6 726.6,290.6 722.9,294.8 722.0,296.6 724.8,298.4 722.6,301.4 719.0,302.6 711.8,302.0 711.2,303.5 705.1,303.5 699.7,305.1 699.1,306.3 691.2,307.8 696.0,301.4 703.3,298.4 703.9,297.2 699.1,296.6 692.4,293.6 696.0,291.2 697.9,288.1 696.0,282.4 702.7,281.5 703.9,274.2" fill="#ececec"/>
<polygon points="726.9,302.3 737.2,297.8 741.4,289.3 743.2,285.1 748.0,281.2 755.3,279.1 760.0,279.1 760.0,320.0 711.2,320.0 709.9,311.7 719.0,314.1 720.2,311.1 726.3,307.5" fill="#ececec"/>
<polygon points="697.3,320.0 700.9,318.4 702.7,320.0" fill="#ececec"/>
</g>
<g clip-path="url(#c24)">
<rect x="755" y="244" width="88" height="46" fill="#ececec"/>
<polygon points="755.0,244.0 768.5,244.0 767.2,247.4 761.8,248.1 761.1,251.4 760.1,254.2 760.1,262.3 763.1,264.3 763.1,275.8 760.4,280.9 759.1,279.2 755.0,278.9" fill="#ffffff"/>
<polygon points="768.5,244.0 779.4,244.0 780.7,248.1 783.4,252.1 784.1,255.5 782.8,258.2 784.8,261.6 784.1,264.0 789.9,263.6 790.2,258.9 793.6,256.5 799.0,256.2 801.0,252.8 803.7,249.1 802.4,244.0 810.5,244.0 811.2,247.7 813.9,244.0 828.8,244.0 826.8,246.0 825.4,250.8 826.1,267.7 820.0,268.4 821.0,270.4 817.3,273.8 812.5,273.1 811.2,269.7 807.1,269.0 802.4,271.1 801.0,273.8 797.0,275.1 792.2,276.5 790.9,278.5 788.8,276.5 786.1,275.8 786.1,271.1 780.0,273.1 777.3,275.8 774.0,275.8 772.6,273.1 768.5,271.1 766.5,266.3 771.9,264.3 767.9,263.0 768.5,258.9 773.3,254.8 769.9,250.8 769.2,246.7" fill="#ffffff"/>
<polygon points="775.0,260.9 776.7,258.9 780.0,258.6 780.7,264.3 779.4,269.0 776.0,269.4 775.3,266.3" fill="#ececec"/>
<polygon points="833.5,244.0 843.0,244.0 843.0,246.7 838.3,250.1 836.2,248.1" fill="#ffffff"/>
<polygon points="762.4,248.7 765.2,249.4 764.5,251.4 762.8,250.8" fill="#ffffff"/>
</g>
</svg>
</div>

<svg class="a" style="left:0;top:0" width="1300" height="827" viewBox="0 0 1300 827">
  <path d="M758.16 311.51 A13.75 13.75 0 1 1 780.44 311.51 L769.30 326.90 Z M762.80 303.70 A6.5 6.5 0 1 0 775.80 303.70 A6.5 6.5 0 1 0 762.80 303.70 Z" fill="#2b5c9c" fill-rule="evenodd"/>
<path d="M272.36 415.71 A13.75 13.75 0 1 1 294.64 415.71 L283.50 431.10 Z M277.00 407.90 A6.5 6.5 0 1 0 290.00 407.90 A6.5 6.5 0 1 0 277.00 407.90 Z" fill="#5596e0" fill-rule="evenodd"/>
<path d="M1049.26 397.61 A13.75 13.75 0 1 1 1071.54 397.61 L1060.40 413.00 Z M1053.90 389.80 A6.5 6.5 0 1 0 1066.90 389.80 A6.5 6.5 0 1 0 1053.90 389.80 Z" fill="#1b304f" fill-rule="evenodd"/>
<path d="M820.36 560.51 A13.75 13.75 0 1 1 842.64 560.51 L831.50 575.90 Z M825.00 552.70 A6.5 6.5 0 1 0 838.00 552.70 A6.5 6.5 0 1 0 825.00 552.70 Z" fill="#0b1a33" fill-rule="evenodd"/>
<path d="M418.36 703.61 A13.75 13.75 0 1 1 440.64 703.61 L429.50 719.00 Z M423.00 695.80 A6.5 6.5 0 1 0 436.00 695.80 A6.5 6.5 0 1 0 423.00 695.80 Z" fill="#b3d4f6" fill-rule="evenodd"/>
</svg>
<div class="a pl" style="left:792.2px;top:293.6px">EUROPE</div>
<div class="a pl" style="left:792.2px;top:312.6px">99%</div>
<div class="a pl" style="left:306px;top:398px">NORTH AMERICA</div>
<div class="a pl" style="left:306px;top:417.4px">95%</div>
<div class="a pl" style="left:1083px;top:379.4px">ASIA</div>
<div class="a pl" style="left:1083px;top:398.6px">97%</div>
<div class="a pl" style="left:854px;top:543.5px">AFRICA</div>
<div class="a pl" style="left:854px;top:562.5px">76%</div>
<div class="a pl" style="left:452px;top:686.1px">SOUTH AMERICA</div>
<div class="a pl" style="left:452px;top:705.1px">95%</div>

<div id="attr" class="a"></div>
<div class="a at">© 2026 Mapbox &nbsp;© OpenStreetMap</div>

<div id="bar" class="a"></div>
<svg class="a" style="left:0;top:800px" width="1300" height="27" viewBox="0 800 1300 27">
  <!-- tableau logo -->
  <g stroke="#333" stroke-width="1.1" fill="none">
    <path d="M41.4 810.1 V816.7 M38.1 813.4 H44.7"/>
    <path d="M37.45 807.15 V811.75 M35.15 809.45 H39.75 M45.43 807.15 V811.75 M43.13 809.45 H47.73 M37.45 815.13 V819.73 M35.15 817.43 H39.75 M45.43 815.13 V819.73 M43.13 817.43 H47.73"/>
    <path d="M41.4 805 V807.9 M39.95 806.45 H42.85 M41.4 819.05 V821.95 M39.95 820.5 H42.85 M34.45 811.95 V814.85 M33 813.4 H35.9 M48.5 811.95 V814.85 M47.05 813.4 H49.95"/>
  </g>
  <g stroke="#bdbdbd" stroke-width="1.2" fill="none">
    <path d="M921 808.5 H930 A6.5 6.5 0 0 1 930 821.5 H921.5 M924 806 L921 808.5 L924 811"/>
    <path d="M975 808.5 H966 A6.5 6.5 0 0 0 966 821.5 H974.5 M972 806 L975 808.5 L972 811"/>
    <path d="M1001 806 V811 M1003 808.5 H1010 A6.5 6.5 0 0 1 1010 821.5 H1001.5 M1006 806 L1003 808.5 L1006 811"/>
    <path d="M1048 808.5 H1041 A4.2 4.2 0 0 0 1041 817 H1047 A4.2 4.2 0 0 0 1051 812.5 M1045 806 L1048 808.5 L1045 811"/>
    <path d="M1095.5 807 V819.5"/>
  </g>
  <polygon points="1065.8,811.8 1073.5,811.8 1069.6,817" fill="#bdbdbd"/>
  <g stroke="#555" stroke-width="1.2" fill="none">
    <path d="M1126 817 H1122 V806.5 H1136.5 V817 H1132 M1129.3 810.5 V822 M1127 819.5 L1129.3 822 L1131.6 819.5"/>
    <path d="M1173.5 810 V806 H1177.5 M1184.5 806 H1188.5 V810 M1188.5 817.5 V821.5 H1184.5 M1177.5 821.5 H1173.5 V817.5"/>
    <rect x="1176.5" y="809" width="9" height="9.5"/>
    <circle cx="1213.5" cy="813.8" r="2.6"/><circle cx="1223" cy="808.5" r="2.6"/><circle cx="1223" cy="819.3" r="2.6"/>
    <path d="M1215.8 812.5 L1220.7 809.7 M1215.8 815.1 L1220.7 818"/>
  </g>
  <polygon points="1142.3,811.8 1149.5,811.8 1145.9,817" fill="#555"/>
</svg>
<div class="a btxt" style="left:55.3px">View on Tableau Public</div>
<div class="a btxt" style="left:1233px">Share</div>
</body></html>
